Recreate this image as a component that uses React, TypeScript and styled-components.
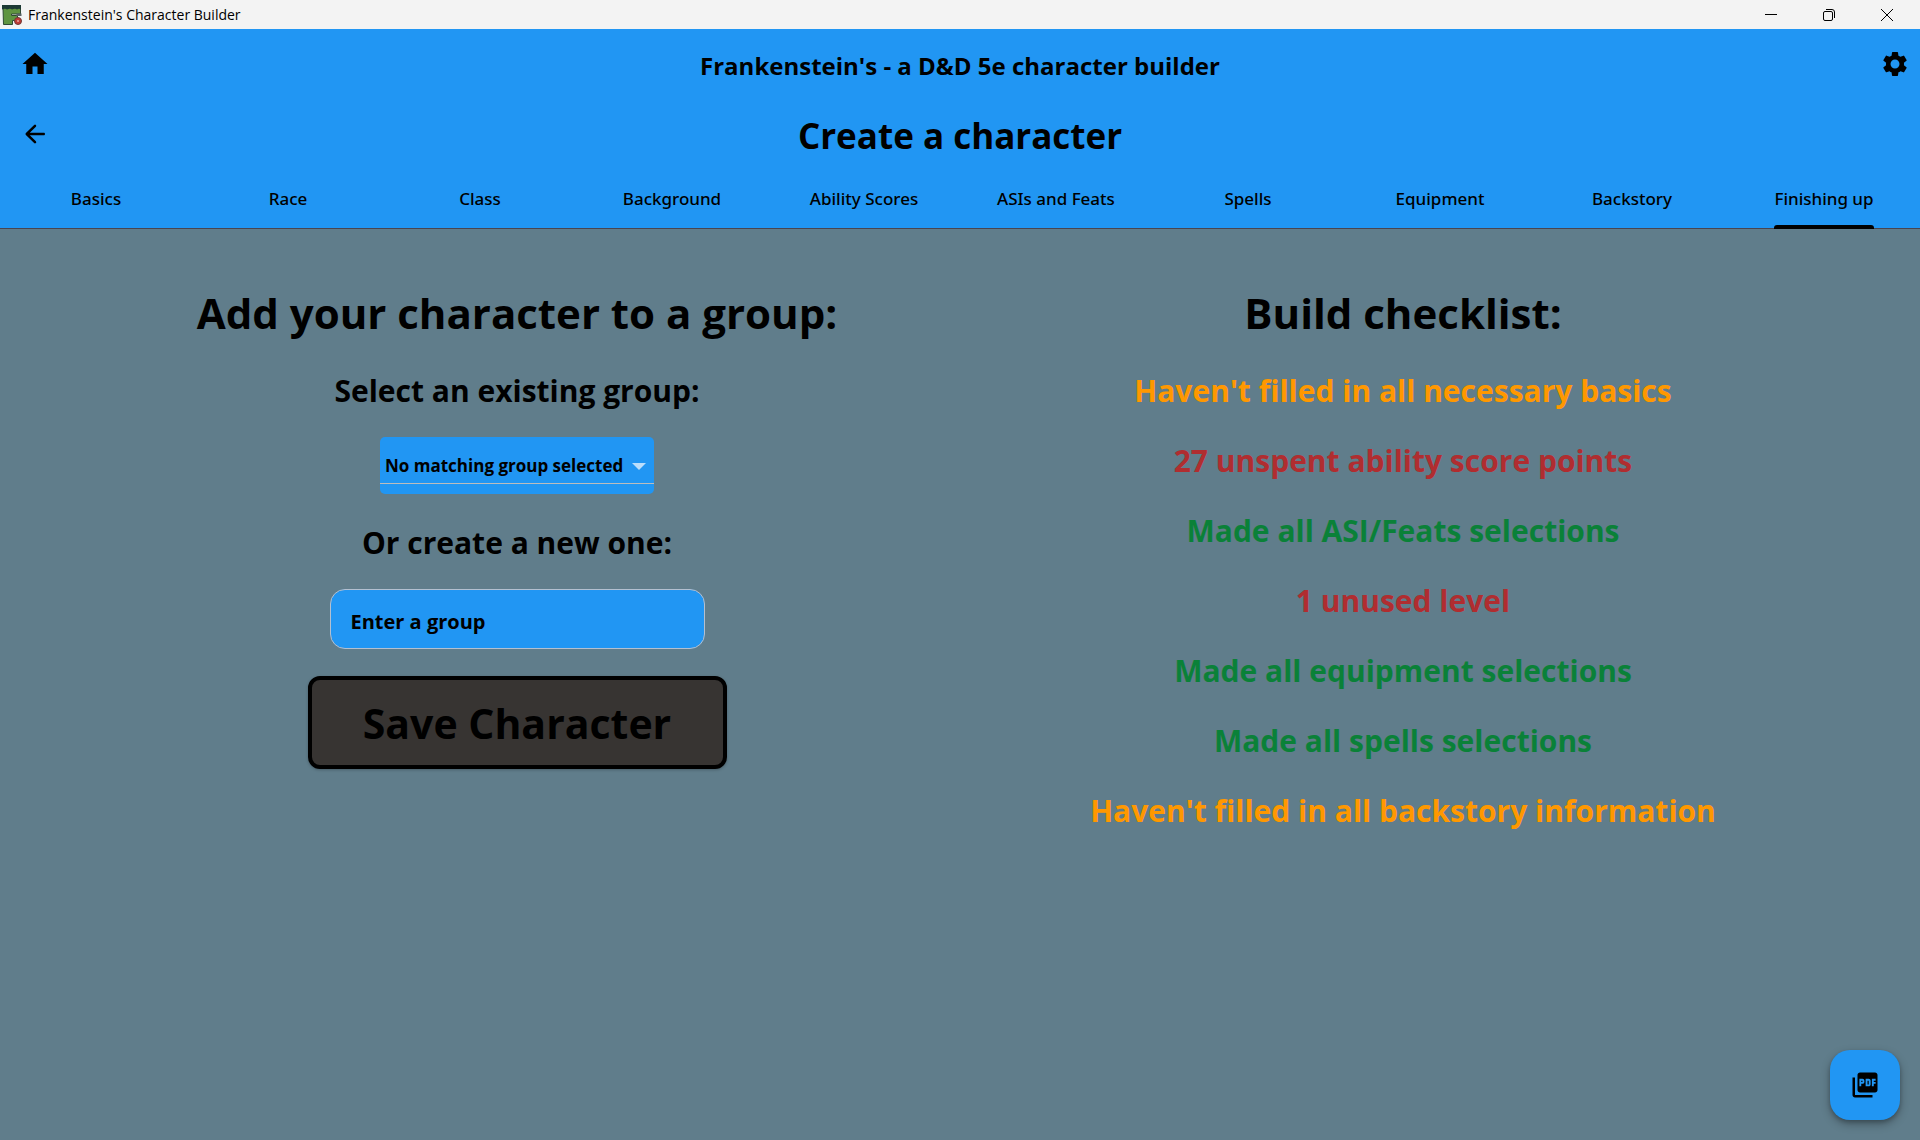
import React, { useState } from "react";
import styled, { createGlobalStyle } from "styled-components";
import { MdHome, MdSettings, MdPictureAsPdf } from "react-icons/md";

const blue = "#2196f3";
const slate = "#607d8b";

const GlobalStyle = createGlobalStyle`
  * { box-sizing: border-box; }
  body { margin: 0; background: ${slate}; }
  button, input, select { font: inherit; color: inherit; }
`;

const Window = styled.div`
  display: flex;
  flex-direction: column;
  min-height: 100vh;
  background: ${slate};
  color: #000;
  font-family: "Open Sans", "Noto Sans", sans-serif;
`;

const TitleBar = styled.div`
  display: flex;
  align-items: center;
  height: 29px;
  padding: 0 4px 0 2px;
  background: #f3f3f3;
`;

const WindowTitle = styled.span`
  flex: 1;
  padding-left: 6px;
  font-size: 14px;
  line-height: 20px;
`;

const WindowButton = styled.button`
  display: flex;
  align-items: center;
  justify-content: center;
  width: 58px;
  height: 29px;
  padding: 0;
  border: 0;
  background: none;
`;

const Header = styled.header`
  background: ${blue};
  box-shadow: inset 0 -1px 0 #49454f;
`;

const HeaderRow = styled.div`
  display: grid;
  grid-template-columns: 70px 1fr 70px;
  align-items: center;
  height: 70px;
`;

const IconButton = styled.button<{ $end?: boolean }>`
  display: flex;
  align-items: center;
  justify-content: center;
  justify-self: ${(p) => (p.$end ? "end" : "start")};
  width: ${(p) => (p.$end ? 50 : 70)}px;
  height: 50px;
  padding: 0;
  border: 0;
  background: none;
  font-size: 30px;
`;

const AppTitle = styled.p`
  margin: 0;
  padding-top: 4px;
  text-align: center;
  font-size: 24px;
  font-weight: 700;
  line-height: 32px;
`;

const PageTitle = styled.h1`
  margin: 0;
  padding-top: 4px;
  text-align: center;
  font-size: 35px;
  font-weight: 700;
  line-height: 50px;
`;

const Tabs = styled.nav`
  display: grid;
  grid-template-columns: repeat(10, 1fr);
  height: 60px;
`;

const Tab = styled.a<{ $active?: boolean }>`
  display: flex;
  justify-content: center;
  color: #000;
  font-family: "Noto Sans", "Open Sans", sans-serif;
  font-size: 17px;
  font-weight: 500;
  line-height: 24px;
  text-decoration: none;
  white-space: nowrap;

  span {
    display: flex;
    flex-direction: column;
    justify-content: space-between;
    padding-top: 18px;
  }

  span::after {
    content: "";
    height: 4px;
    border-radius: 3px 3px 0 0;
    background: ${(p) => (p.$active ? "#000" : "transparent")};
  }
`;

const Content = styled.main`
  display: grid;
  grid-template-columns: 1fr 1fr;
  align-items: start;
  padding: 54px 74px;
`;

const Column = styled.section`
  display: flex;
  flex-direction: column;
  align-items: center;
`;

const Heading = styled.h2`
  margin: 0;
  font-size: 42px;
  font-weight: 700;
  line-height: 59px;
`;

const Label = styled.label`
  margin-top: 28px;
  font-size: 30px;
  font-weight: 700;
  line-height: 42px;
`;

const SelectBox = styled.div`
  position: relative;
  width: 274px;
  height: 57px;
  margin-top: 25px;
  padding-bottom: 10px;
  border-radius: 5px;
  background: ${blue};

  svg {
    position: absolute;
    right: 8px;
    top: 26px;
    pointer-events: none;
  }
`;

const GroupSelect = styled.select`
  appearance: none;
  display: block;
  width: 100%;
  height: 47px;
  padding: 11px 30px 0 5px;
  border: 0;
  border-bottom: 1px solid #bdbdbd;
  background: none;
  font-size: 17px;
  font-weight: 700;
`;

const GroupInput = styled.input`
  width: 375px;
  height: 60px;
  margin-top: 25px;
  padding: 4px 20px 0;
  border: 1px solid #b4c0d0;
  border-radius: 15px;
  background: ${blue};
  font-size: 20px;
  font-weight: 700;

  &::placeholder {
    color: #000;
    opacity: 1;
  }
`;

const SaveButton = styled.button`
  width: 419px;
  height: 93px;
  margin-top: 27px;
  padding: 2px 0 0;
  border: 4px solid #000;
  border-radius: 12px;
  background: #373432;
  box-shadow: 0 1px 3px rgba(0, 0, 0, 0.25);
  font-size: 41px;
  font-weight: 700;
  line-height: 59px;
`;

const Checklist = styled.ul`
  display: flex;
  flex-direction: column;
  align-items: center;
  gap: 28px;
  margin: 28px 0 0;
  padding: 0;
  list-style: none;
`;

const statusColors = { warning: "#ff9800", missing: "#b02d30", done: "#0a8138" };

const CheckItem = styled.li<{ $status: keyof typeof statusColors }>`
  color: ${(p) => statusColors[p.$status]};
  font-size: 30px;
  font-weight: 700;
  line-height: 42px;
`;

const PdfButton = styled.button`
  position: fixed;
  right: 20px;
  bottom: 20px;
  display: flex;
  align-items: center;
  justify-content: center;
  width: 70px;
  height: 70px;
  padding: 0;
  border: 0;
  border-radius: 20px;
  background: ${blue};
  box-shadow: 0 4px 10px rgba(0, 0, 0, 0.3), 0 2px 4px rgba(0, 0, 0, 0.2);
  font-size: 30px;
`;

const Logo = () => (
  <svg width="20" height="20" viewBox="0 0 20 20" aria-hidden="true">
    <path d="M1 3h17.500v6h-9v1.500h6v5h-5v4H1.500z" fill="#5f9440" stroke="#2f4a33" />
    <path d="M0 0h19v4.500l-2-1-2 1-2-1-3 1-2-1-3 1-2-1-3 1z" fill="#1d3a35" />
    <path d="M14.500 8.500h5v2.500h-5z" fill="#596466" />
    <circle cx="16" cy="16" r="3.500" fill="#c33a35" stroke="#6d3a36" />
    <circle cx="16" cy="16" r="1" fill="#e9a59f" />
  </svg>
);

const BackArrow = () => (
  <svg width="30" height="30" viewBox="0 0 24 24" aria-hidden="true">
    <path d="M19 11H7.830l4.880-4.880c.39-.39.39-1.030 0-1.420a.996.996 0 0 0-1.410 0l-6.590 6.590a.996.996 0 0 0 0 1.410l6.590 6.590a.996.996 0 1 0 1.410-1.410L7.830 13H19c.55 0 1-.45 1-1s-.45-1-1-1z" />
  </svg>
);

const tabs = ["Basics", "Race", "Class", "Background", "Ability Scores", "ASIs and Feats", "Spells", "Equipment", "Backstory", "Finishing up"];

const checks: { text: string; status: keyof typeof statusColors }[] = [
  { text: "Haven't filled in all necessary basics", status: "warning" },
  { text: "27 unspent ability score points", status: "missing" },
  { text: "Made all ASI/Feats selections", status: "done" },
  { text: "1 unused level", status: "missing" },
  { text: "Made all equipment selections", status: "done" },
  { text: "Made all spells selections", status: "done" },
  { text: "Haven't filled in all backstory information", status: "warning" },
];

export default function App() {
  const [active, setActive] = useState("Finishing up");
  const [group, setGroup] = useState("");

  return (
    <Window>
      <GlobalStyle />
      <TitleBar>
        <Logo />
        <WindowTitle>Frankenstein's Character Builder</WindowTitle>
        <WindowButton aria-label="Minimize">
          <svg width="12" height="12" fill="none" stroke="#000"><path d="M0 5.5h12" /></svg>
        </WindowButton>
        <WindowButton aria-label="Restore">
          <svg width="12" height="12" fill="none" stroke="#000">
            <rect x=".5" y="2.5" width="9" height="9" rx="1.5" />
            <path d="M3 .5h6a2.5 2.5 0 0 1 2.5 2.5v6" />
          </svg>
        </WindowButton>
        <WindowButton aria-label="Close">
          <svg width="12" height="12" fill="none" stroke="#000"><path d="M0 0l12 12M12 0L0 12" /></svg>
        </WindowButton>
      </TitleBar>

      <Header>
        <HeaderRow>
          <IconButton aria-label="Home"><MdHome /></IconButton>
          <AppTitle>Frankenstein's - a D&amp;D 5e character builder</AppTitle>
          <IconButton $end aria-label="Settings"><MdSettings /></IconButton>
        </HeaderRow>
        <HeaderRow>
          <IconButton aria-label="Back"><BackArrow /></IconButton>
          <PageTitle>Create a character</PageTitle>
        </HeaderRow>
        <Tabs>
          {tabs.map((t) => (
            <Tab key={t} href="#" $active={t === active} onClick={() => setActive(t)}>
              <span>{t}</span>
            </Tab>
          ))}
        </Tabs>
      </Header>

      <Content>
        <Column>
          <Heading>Add your character to a group:</Heading>
          <Label htmlFor="existing-group">Select an existing group:</Label>
          <SelectBox>
            <GroupSelect id="existing-group">
              <option>No matching group selected</option>
            </GroupSelect>
            <svg width="14" height="7" viewBox="0 0 14 7"><path d="M0 0h14L7 7z" fill="#bbdefb" /></svg>
          </SelectBox>
          <Label htmlFor="new-group">Or create a new one:</Label>
          <GroupInput id="new-group" placeholder="Enter a group" value={group} onChange={(e) => setGroup(e.target.value)} />
          <SaveButton>Save Character</SaveButton>
        </Column>
        <Column>
          <Heading>Build checklist:</Heading>
          <Checklist>
            {checks.map((c) => (
              <CheckItem key={c.text} $status={c.status}>{c.text}</CheckItem>
            ))}
          </Checklist>
        </Column>
      </Content>

      <PdfButton aria-label="Export PDF"><MdPictureAsPdf /></PdfButton>
    </Window>
  );
}
